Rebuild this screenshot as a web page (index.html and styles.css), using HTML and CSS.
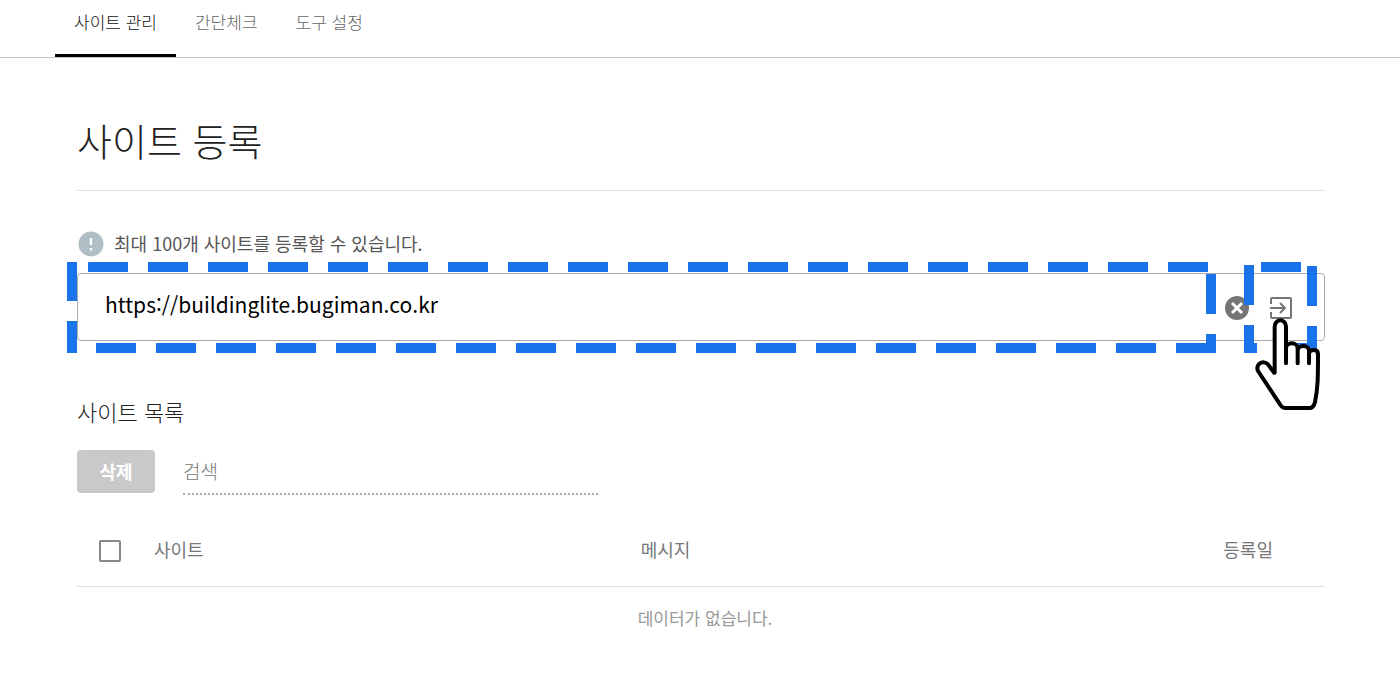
FILE: index.html
```
<!DOCTYPE html>
<html lang="ko">
<head>
    <meta charset="UTF-8">
    <meta name="viewport" content="width=device-width, initial-scale=1.0">
    <title>사이트 관리</title>
    <link rel="stylesheet" href="styles.css">
</head>
<body>

<nav class="tabs">
    <a href="#sites" class="tab active">사이트 관리</a>
    <a href="#check" class="tab">간단체크</a>
    <a href="#settings" class="tab">도구 설정</a>
</nav>

<main class="container">
    <h1>사이트 등록</h1>

    <div class="notice">
        <svg class="notice-icon" viewBox="0 0 26 26" aria-hidden="true">
            <circle cx="13" cy="13" r="12.5" fill="#b0bec5"/>
            <path d="M13 7v7M13 17v2.5" stroke="#fff" stroke-width="2.4"/>
        </svg>
        <label for="siteUrl">최대 100개 사이트를 등록할 수 있습니다.</label>
    </div>

    <form class="site-form" onsubmit="return false">
        <div class="url-field">
            <input id="siteUrl" class="url-input" type="text" value="https://buildinglite.bugiman.co.kr">
            <svg class="highlight highlight-url" aria-hidden="true">
                <line x1="21" y1="5" x2="100%" y2="5"/>
                <line x1="100%" y1="12" x2="100%" y2="91"/>
                <line x1="100%" y1="86" x2="0" y2="86" stroke-dashoffset="5"/>
                <line x1="5" y1="91" x2="5" y2="0" class="left-side"/>
            </svg>
        </div>
        <button type="reset" class="icon-button clear-button" aria-label="지우기">
            <svg viewBox="0 0 24 24" width="24" height="24">
                <circle cx="12" cy="12" r="12" fill="#757575"/>
                <path d="M7 7l10 10M17 7L7 17" stroke="#fff" stroke-width="3"/>
            </svg>
        </button>
        <div class="submit-field">
            <button type="submit" class="icon-button" aria-label="등록">
                <svg viewBox="0 0 24 24" width="24" height="24" fill="none" stroke="#757575" stroke-width="2">
                    <path d="M2 8V3q0-1 1-1h18q1 0 1 1v18q0 1-1 1H3q-1 0-1-1v-5"/>
                    <path d="M1 12h15M11 7l5 5-5 5"/>
                </svg>
            </button>
            <svg class="highlight highlight-submit" aria-hidden="true">
                <line x1="17" y1="5" x2="57" y2="5"/>
                <line x1="68" y1="4" x2="68" y2="91"/>
                <line x1="73" y1="86" x2="0" y2="86"/>
                <line x1="5" y1="3" x2="5" y2="91"/>
            </svg>
            <svg class="pointer" viewBox="345 204 201 279" aria-hidden="true">
                <path d="M404 368V230a17 19 0 0 1 34 0V296a17.5 16 0 0 1 35 0V304a17 16 0 0 1 34 0V309q3-9 14-9 13 0 13 13C534 380 534 412 525 456Q521 474 508 474H436Q428 474 422 466L356 366Q347 352 358 341 371 332 384 343Z" fill="#fff"/>
                <path d="M404 368V230a17 19 0 0 1 34 0V340M438 296a17.5 16 0 0 1 35 0V340M473 304a17 16 0 0 1 34 0V340M507 309q3-9 14-9 13 0 13 13C534 380 534 412 525 456Q521 474 508 474H436Q428 474 422 466L356 366Q347 352 358 341 371 332 384 343L402 368"/>
            </svg>
        </div>
    </form>

    <h2>사이트 목록</h2>

    <div class="toolbar">
        <button type="button" class="delete-button">삭제</button>
        <input class="search-input" type="text" placeholder="검색" aria-label="검색">
    </div>

    <table class="site-table">
        <thead>
            <tr>
                <th class="col-check"><input type="checkbox" aria-label="전체 선택"></th>
                <th class="col-site">사이트</th>
                <th class="col-message">메시지</th>
                <th class="col-date">등록일</th>
            </tr>
        </thead>
        <tbody>
            <tr>
                <td colspan="4">데이터가 없습니다.</td>
            </tr>
        </tbody>
    </table>
</main>

</body>
</html>
```
FILE: styles.css
```
* {
    box-sizing: border-box;
}

body {
    margin: 0;
    background-color: #fff;
    color: #222;
    font-family: "Noto Sans CJK KR", "Noto Sans", sans-serif;
    font-size: 18px;
    font-weight: 300;
}

button,
input {
    font-family: inherit;
    font-weight: inherit;
}

.tabs {
    display: flex;
    height: 58px;
    padding-left: 55px;
    border-bottom: 1px solid #c4c4c4;
}

.tab {
    height: 57px;
    padding: 10px 19px 0;
    border-bottom: 3px solid transparent;
    color: #666;
    font-size: 17px;
    line-height: 24px;
    text-decoration: none;
}

.tab.active {
    border-bottom-color: #000;
    color: #111;
}

.container {
    padding: 52px 75px 40px 77px;
}

h1 {
    margin: 0;
    padding-bottom: 20px;
    border-bottom: 1px solid #e0e0e0;
    font-size: 38px;
    font-weight: 300;
    line-height: 60px;
}

.notice {
    display: flex;
    align-items: center;
    gap: 10px;
    margin-top: 40px;
    padding-left: 1px;
    color: #555;
    font-weight: 400;
    line-height: 26px;
}

.notice label {
    padding-bottom: 2px;
    line-height: 24px;
}

.notice-icon {
    width: 26px;
    height: 26px;
}

.site-form {
    display: flex;
    align-items: center;
    height: 68px;
    margin-top: 16px;
    border: 1px solid #aaa;
    border-radius: 4px;
}

.url-field {
    position: relative;
    flex: 1;
}

.url-input {
    display: block;
    width: 100%;
    height: 66px;
    padding: 0 28px 6px 27px;
    border: none;
    outline: none;
    background: none;
    color: #000;
    font-size: 21px;
    font-weight: 400;
}

.icon-button {
    display: block;
    padding: 0;
    border: none;
    background: none;
    line-height: 0;
    cursor: pointer;
}

.clear-button {
    margin: 2px 8px 0 14px;
}

.submit-field {
    position: relative;
    padding: 2px 31px 0 12px;
}

/* dashed frames around the url and the submit button */
.highlight {
    position: absolute;
    height: 91px;
    overflow: visible;
    pointer-events: none;
    stroke: #1a73e8;
    stroke-width: 10px;
    stroke-dasharray: 40 20;
}

.highlight-url {
    top: -12px;
    left: -11px;
    width: calc(100% + 11px);
}

.highlight-url .left-side {
    stroke-dasharray: 32 20 40;
}

.highlight-submit {
    top: -32px;
    left: -13px;
    width: 73px;
}

.pointer {
    position: absolute;
    top: 24px;
    left: -2px;
    width: 67px;
    height: 93px;
    pointer-events: none;
    fill: none;
    stroke: #000;
    stroke-width: 12px;
    stroke-linecap: round;
    stroke-linejoin: round;
}

.pointer path:first-child {
    stroke: none;
}

h2 {
    margin: 54px 0 0;
    color: #222;
    font-size: 22px;
    font-weight: 300;
    line-height: 32px;
}

.toolbar {
    display: flex;
    gap: 28px;
    margin-top: 23px;
}

.delete-button {
    width: 78px;
    height: 43px;
    padding: 0 0 2px;
    border: none;
    border-radius: 4px;
    background-color: #c9c9c9;
    color: #fff;
    font-size: 18px;
    font-weight: 700;
}

.search-input {
    width: 415px;
    height: 45px;
    padding: 0 0 2px;
    border: none;
    border-bottom: 2px dotted #aaa;
    outline: none;
    font-size: 19px;
}

.search-input::placeholder {
    color: #777;
}

.site-table {
    width: 100%;
    margin-top: 22px;
    border-collapse: collapse;
    table-layout: fixed;
}

.site-table th {
    height: 69px;
    padding: 0 0 4px;
    border-bottom: 1px solid #e0e0e0;
    color: #777;
    font-weight: 400;
    text-align: left;
}

.site-table td {
    height: 62px;
    padding: 0 0 0 8px;
    color: #999;
    font-size: 17px;
    font-weight: 400;
    text-align: center;
}

.site-table .col-check {
    width: 77px;
    padding: 0 0 0 22px;
}

.col-site {
    width: 39%;
}

.site-table .col-date {
    padding-right: 52px;
    text-align: right;
}

.col-check input {
    display: block;
    width: 22px;
    height: 22px;
    margin: 0;
    border: 2px solid #888;
    border-radius: 2px;
    appearance: none;
}
```
